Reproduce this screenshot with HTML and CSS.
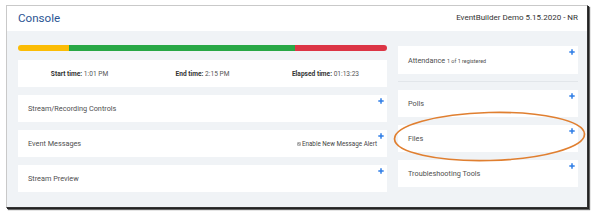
FILE: index.html
```html
<!DOCTYPE html>
<html>
<head>
<meta charset="utf-8">
<link rel="stylesheet" href="styles.css">
</head>
<body>
<div class="window">
  <header class="topbar">
    <h1 class="title">Console</h1>
    <div class="event-name">EventBuilder Demo 5.15.2020 - NR</div>
  </header>
  <main class="content">
    <section class="col-left">
      <div class="progress">
        <span class="seg seg-yellow"></span>
        <span class="seg seg-green"></span>
        <span class="seg seg-red"></span>
      </div>
      <div class="card timing">
        <div class="time"><b>Start time:</b> 1:01 PM</div>
        <div class="time"><b>End time:</b> 2:15 PM</div>
        <div class="time"><b>Elapsed time:</b> 01:13:23</div>
      </div>
      <div class="card panel">
        <span class="panel-title">Stream/Recording Controls</span>
        <svg class="plus" viewBox="0 0 6 6"><path d="M3 0.3V5.7M0.3 3H5.7"/></svg>
      </div>
      <div class="card panel">
        <span class="panel-title">Event Messages</span>
        <label class="alert"><svg class="checkbox" viewBox="0 0 5 5"><rect x="0.25" y="0.25" width="4.5" height="4.5" rx="0.6"/><path d="M1.1 2.6L2.1 3.5L3.9 1.4"/></svg> Enable New Message Alert</label>
        <svg class="plus" viewBox="0 0 6 6"><path d="M3 0.3V5.7M0.3 3H5.7"/></svg>
      </div>
      <div class="card panel">
        <span class="panel-title">Stream Preview</span>
        <svg class="plus" viewBox="0 0 6 6"><path d="M3 0.3V5.7M0.3 3H5.7"/></svg>
      </div>
    </section>
    <section class="col-right">
      <div class="card panel attendance">
        <span class="panel-title">Attendance <small class="sub">1 of 1 registered</small></span>
        <svg class="plus" viewBox="0 0 6 6"><path d="M3 0.3V5.7M0.3 3H5.7"/></svg>
      </div>
      <hr class="divider">
      <div class="card panel">
        <span class="panel-title">Polls</span>
        <svg class="plus" viewBox="0 0 6 6"><path d="M3 0.3V5.7M0.3 3H5.7"/></svg>
      </div>
      <div class="card panel">
        <span class="panel-title">Files</span>
        <svg class="plus" viewBox="0 0 6 6"><path d="M3 0.3V5.7M0.3 3H5.7"/></svg>
      </div>
      <div class="card panel">
        <span class="panel-title">Troubleshooting Tools</span>
        <svg class="plus" viewBox="0 0 6 6"><path d="M3 0.3V5.7M0.3 3H5.7"/></svg>
      </div>
    </section>
  </main>
</div>
<svg class="highlight" width="600" height="220" viewBox="0 0 600 220">
  <ellipse cx="489.5" cy="136.5" rx="95" ry="24" transform="rotate(-1.5 489.5 136.5)"/>
</svg>
</body>
</html>
```
FILE: styles.css
```css
* { box-sizing: border-box; }
html, body {
  margin: 0;
  padding: 0;
  background: #ffffff;
  font-family: Roboto, "Liberation Sans", Arial, sans-serif;
  color: #555;
}
body {
  width: 600px;
  height: 220px;
  padding: 5px 0 0 6px;
  position: relative;
  overflow: hidden;
}
.window {
  width: 582px;
  height: 203px;
  border: 1px solid #c9c9c9;
  border-right-color: #333;
  border-bottom-color: #333;
  box-shadow: 1px 1px 0 #222, 2px 2px 1px rgba(0,0,0,0.6);
  display: flex;
  flex-direction: column;
  background: #f0f3f6;
}
.topbar {
  height: 25px;
  flex: none;
  background: #fff;
  display: flex;
  align-items: center;
  justify-content: space-between;
  padding: 0 9px 1px 11px;
}
.title {
  margin: 0;
  font-size: 11.6px;
  font-weight: 400;
  color: #2c5593;
}
.event-name {
  font-size: 8px;
  color: #333;
  padding-bottom: 2px;
}
.content {
  flex: 1;
  display: grid;
  grid-template-columns: 369px 180px;
  column-gap: 11px;
  padding: 14px 0 0 11px;
  align-items: start;
}
.col-left, .col-right {
  display: flex;
  flex-direction: column;
}
.col-left { gap: 8px; }
.progress {
  height: 6px;
  display: flex;
  border-radius: 3px;
  overflow: hidden;
  margin-bottom: 1px;
}
.seg { display: block; height: 100%; }
.seg-yellow { width: 51px; background: #fbbc05; }
.seg-green { width: 226px; background: #28a745; }
.seg-red { flex: 1; background: #dc3545; }
.card {
  background: #fff;
  height: 27px;
  position: relative;
}
.timing {
  display: grid;
  grid-template-columns: 1fr 1fr 1fr;
  align-items: center;
  text-align: center;
  font-size: 6.6px;
  color: #555;
}
.timing b { color: #333; font-weight: 700; }
.panel {
  display: flex;
  align-items: center;
  padding: 0 10px 0 10px;
}
.panel-title {
  font-size: 7.3px;
  color: #4f4f4f;
  flex: 1;
}
.sub { font-size: 5.4px; }
.alert {
  font-size: 6.3px;
  color: #444;
  display: flex;
  align-items: center;
  gap: 1px;
}
.checkbox {
  width: 4px;
  height: 4px;
  fill: #9a9a9a;
  stroke: none;
}
.checkbox path {
  fill: none;
  stroke: #fff;
  stroke-width: 0.9;
}
.plus {
  position: absolute;
  top: 3px;
  right: 3px;
  width: 6px;
  height: 6px;
  stroke: #2f7ee6;
  stroke-width: 1.5;
  fill: none;
}
.col-right { padding-top: 1px; }
.attendance { height: 28px; }
.divider {
  border: 0;
  border-top: 1px solid #e2e6ea;
  margin: 7px 0 8px 0;
  height: 0;
}
.col-right .card + .card { margin-top: 8px; }
.highlight {
  position: absolute;
  left: 0;
  top: 0;
  pointer-events: none;
}
.highlight ellipse {
  fill: none;
  stroke: #e07f30;
  stroke-width: 1.7;
}
```
